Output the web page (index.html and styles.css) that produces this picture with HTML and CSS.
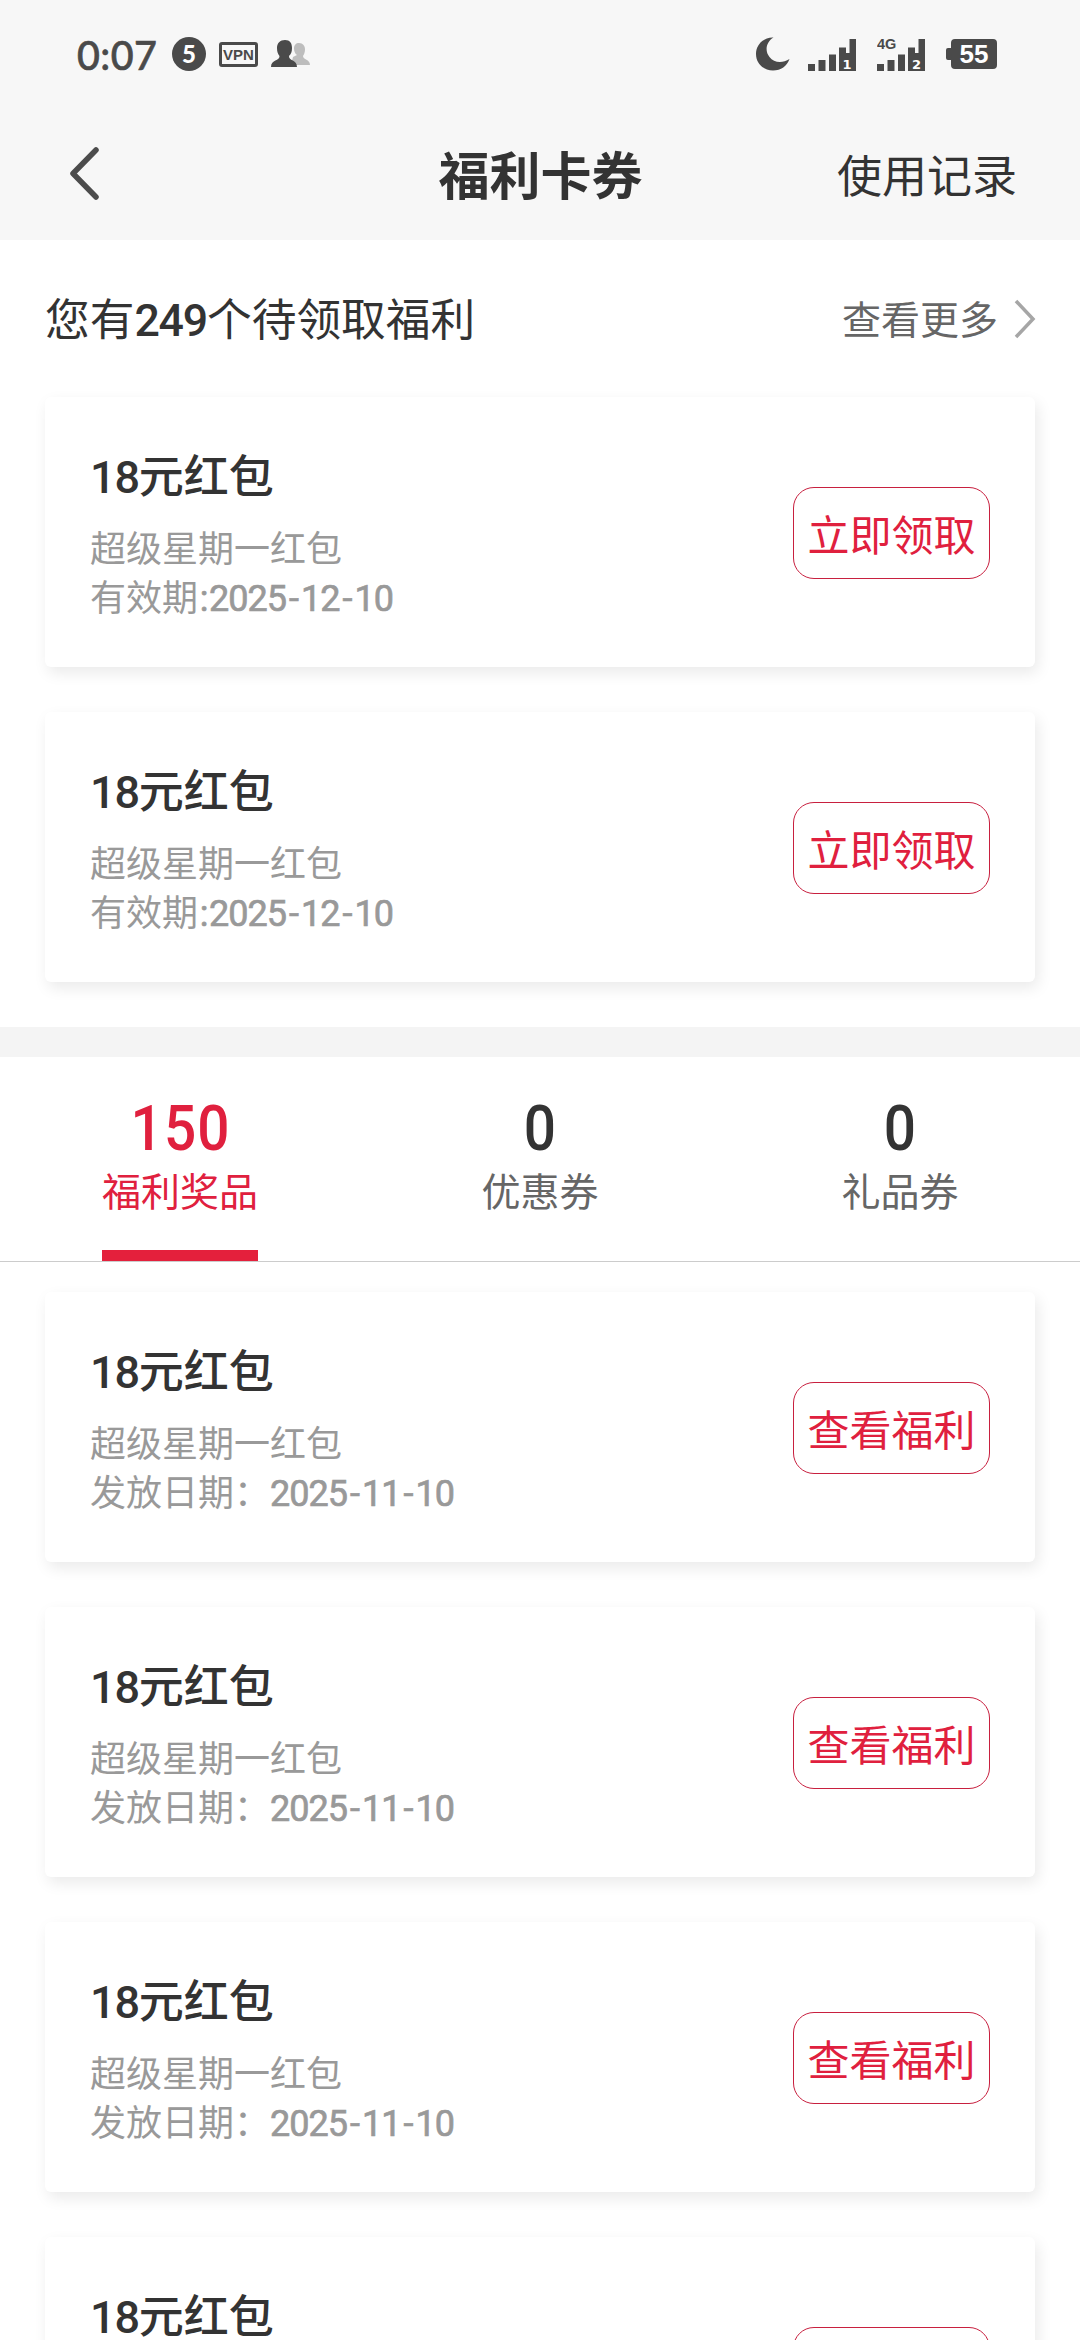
FILE: index.html
```html
<!DOCTYPE html>
<html lang="zh-CN">
<head>
<meta charset="utf-8">
<title>福利卡券</title>
<link rel="stylesheet" href="styles.css">
</head>
<body>
<div class="screen">
<header class="top">
  <div class="status">
    <div class="status-left">
      <span class="time">0:07</span>
      <span class="count">5</span>
      <span class="vpn">VPN</span>
      <svg class="people" width="40" height="28" viewBox="0 0 40 28">
        <path fill="#bdbdbd" d="M28 3c4 0 6 3 6 6.500c0 3-1 5-2 6.500c0 4 7 3 7 9H20l2-8 4-2c-2-1-3-4-3-6.500C23 5 25 3 28 3Z"/>
        <path fill="#4a4a4a" d="M14 0c5 0 7 3 7 8c0 4-1 6-3 8c-.5 5 8 3.500 8 11H0c0-7.500 9-6 8.500-11C7 14 6 12 6 8c0-5 3-8 8-8Z"/>
      </svg>
    </div>
    <div class="status-right">
      <svg class="moon" width="34" height="34" viewBox="0 0 34 34"><path fill="#4a4a4a" d="M17.500.5C10 5 8.500 14 13.500 20c4.500 6 13 6.500 20 2C31 29 25 33.500 17 33.500C7.500 33.500 0 26.500 0 17C0 7.500 8 0 17.500.5Z"/></svg>
      <svg class="signal" width="49" height="36" viewBox="0 0 49 36">
        <g fill="#4a4a4a"><path d="M0 28h7v7H0zM10.500 24h7v11h-7zM21 18.500h7V35h-7zM31 11.500h7V17h3.500V3H48v32H31z"/></g>
        <text class="sim" x="39" y="32.500" text-anchor="middle">1</text>
      </svg>
      <svg class="signal" width="49" height="36" viewBox="0 0 49 36">
        <g fill="#4a4a4a"><path d="M0 28h7v7H0zM10.500 24h7v11h-7zM21 18.500h7V35h-7zM31 11.500h7V17h3.500V3H48v32H31z"/></g>
        <text class="sim" x="39.500" y="32.500" text-anchor="middle">2</text>
        <text class="net" x="0" y="13">4G</text>
      </svg>
      <svg class="battery" width="51" height="30" viewBox="0 0 51 30">
        <path fill="#4a4a4a" d="M9 0h38a4 4 0 0 1 4 4v22a4 4 0 0 1-4 4H9a4 4 0 0 1-4-4v-5H2a2 2 0 0 1-2-2v-8a2 2 0 0 1 2-2h3V4a4 4 0 0 1 4-4Z"/>
        <text class="level" x="28" y="24" text-anchor="middle">55</text>
      </svg>
    </div>
  </div>
  <nav class="nav">
    <svg class="back" width="34" height="56" viewBox="0 0 34 56"><path d="M28 4 5 27.500 28 51" fill="none" stroke="#4c4c4c" stroke-width="5.500" stroke-linecap="round" stroke-linejoin="round"/></svg>
    <h1 class="title">福利卡券</h1>
    <a class="history">使用记录</a>
  </nav>
</header>

<section class="pending">
  <div class="pending-head">
    <p class="pending-text">您有<span class="num">249</span>个待领取福利</p>
    <a class="more"><span class="more-text">查看更多</span>
      <svg width="22" height="40" viewBox="0 0 22 40"><path d="M2 2 19 20 2 38" fill="none" stroke="#a6a6a6" stroke-width="3.500"/></svg>
    </a>
  </div>
  <div class="cards">
    <article class="card">
      <div class="info">
        <h2 class="name"><span class="num">18</span>元红包</h2>
        <p class="desc">超级星期一红包</p>
        <p class="desc">有效期<span class="date"><b>:</b>2025<i>-</i>12<i>-</i>10</span></p>
      </div>
      <button class="btn">立即领取</button>
    </article>
    <article class="card">
      <div class="info">
        <h2 class="name"><span class="num">18</span>元红包</h2>
        <p class="desc">超级星期一红包</p>
        <p class="desc">有效期<span class="date"><b>:</b>2025<i>-</i>12<i>-</i>10</span></p>
      </div>
      <button class="btn">立即领取</button>
    </article>
  </div>
</section>

<section class="owned">
  <div class="tabs">
    <div class="tab active"><span class="total">150</span><span class="label">福利奖品</span></div>
    <div class="tab"><span class="total">0</span><span class="label">优惠券</span></div>
    <div class="tab"><span class="total">0</span><span class="label">礼品券</span></div>
  </div>
  <div class="cards">
    <article class="card">
      <div class="info">
        <h2 class="name"><span class="num">18</span>元红包</h2>
        <p class="desc">超级星期一红包</p>
        <p class="desc">发放日期：<span class="date">2025<i>-</i>11<i>-</i>10</span></p>
      </div>
      <button class="btn">查看福利</button>
    </article>
    <article class="card">
      <div class="info">
        <h2 class="name"><span class="num">18</span>元红包</h2>
        <p class="desc">超级星期一红包</p>
        <p class="desc">发放日期：<span class="date">2025<i>-</i>11<i>-</i>10</span></p>
      </div>
      <button class="btn">查看福利</button>
    </article>
    <article class="card">
      <div class="info">
        <h2 class="name"><span class="num">18</span>元红包</h2>
        <p class="desc">超级星期一红包</p>
        <p class="desc">发放日期：<span class="date">2025<i>-</i>11<i>-</i>10</span></p>
      </div>
      <button class="btn">查看福利</button>
    </article>
    <article class="card">
      <div class="info">
        <h2 class="name"><span class="num">18</span>元红包</h2>
        <p class="desc">超级星期一红包</p>
        <p class="desc">发放日期：<span class="date">2025<i>-</i>11<i>-</i>10</span></p>
      </div>
      <button class="btn">查看福利</button>
    </article>
  </div>
</section>
</div>
</body>
</html>
```

FILE: styles.css
```css
* { box-sizing: border-box; margin: 0; padding: 0; }

body {
  background: #fff;
  color: #333;
  font-family: "Noto Sans CJK SC", sans-serif;
}

.screen { width: 1080px; height: 2340px; overflow: hidden; }

.top { height: 240px; background: #f7f7f7; }

.status {
  height: 108px;
  padding: 0 83px 0 77px;
  display: flex;
  justify-content: space-between;
  align-items: center;
  color: #4a4a4a;
}
.status-left, .status-right { display: flex; align-items: center; }
.time { width: 95px; font: 500 39.5px/50px Lato, sans-serif; letter-spacing: .4px; -webkit-text-stroke: .6px #4a4a4a; padding-top: 2px; }
.count {
  width: 34px; height: 34px; border-radius: 50%;
  background: #4a4a4a; color: #fff;
  font: 900 24px/34px Lato, sans-serif; text-align: center;
}
.vpn {
  width: 39px; height: 25px; margin-left: 13px;
  border: 3px solid #4a4a4a; border-radius: 3px;
  font: bold 15px/19px "Liberation Sans", sans-serif; text-align: center;
}
.people { margin-left: 13px; }
.signal { margin-left: 18px; }
.signal + .signal { margin-left: 20px; }
.battery { margin-left: 20px; }
.sim { font: bold 13px "DejaVu Sans", sans-serif; fill: #fff; }
.net { font: bold 14.5px "Liberation Sans", sans-serif; fill: #4a4a4a; }
.level { font: bold 26px "Liberation Sans", sans-serif; fill: #fff; }

.nav {
  height: 132px;
  padding: 0 63px 0 68px;
  display: grid;
  grid-template-columns: 1fr auto 1fr;
  align-items: center;
}
.title { font-size: 51px; line-height: 70px; font-weight: 700; margin: -3px 0 0 -4px; }
.history { justify-self: end; font-size: 45px; line-height: 60px; }

.pending { height: 817px; border-bottom: 30px solid #f4f4f4; }
.pending-head {
  height: 157px;
  padding: 0 44px 0 45px;
  display: flex;
  justify-content: space-between;
  align-items: center;
}
.pending-text { font-size: 44.7px; line-height: 60px; padding-top: 1px; }
.num { font-family: Roboto, sans-serif; font-weight: 500; letter-spacing: -1.2px; }
.more { display: flex; align-items: center; gap: 16px; font-size: 39px; color: #666; }
.more-text { margin-top: -3px; }

.cards { display: flex; flex-direction: column; gap: 45px; padding: 0 45px; }
.card {
  flex: none;
  height: 270px;
  padding: 0 45px;
  display: flex;
  justify-content: space-between;
  align-items: center;
  background: #fff;
  border-radius: 6px;
  box-shadow: 3px 6px 15px rgba(0, 0, 0, .085);
}
.info { padding-top: 4px; }
.name { font-size: 45px; line-height: 60px; font-weight: 500; margin-bottom: 14px; }
.desc { font-size: 36px; line-height: 49px; color: #999; }
.date { font-family: Roboto, sans-serif; font-weight: 400; letter-spacing: -1px; -webkit-text-stroke: .7px #999; }
.date b { display: inline-block; width: 11px; text-align: center; font-weight: 400; }
.date i { display: inline-block; width: 15px; text-align: center; font-style: normal; }
.btn {
  width: 197px;
  height: 92px;
  margin-top: 2px;
  border: 1px solid #c8203f;
  border-radius: 21px;
  background: none;
  color: #e0203e;
  font: 42px/1 "Noto Sans CJK SC", sans-serif;
}

.tabs {
  height: 205px;
  margin-bottom: 30px;
  display: grid;
  grid-template-columns: repeat(3, 1fr);
  border-bottom: 1px solid #ccc;
}
.tab {
  justify-self: center;
  display: flex;
  flex-direction: column;
  align-items: center;
  padding-top: 37px;
  border-bottom: 11px solid transparent;
}
.total {
  font: 500 63px/70px Roboto, sans-serif;
  letter-spacing: 1.3px;
  margin-left: 2px;
  transform: scaleX(.9);
}
.label { font-size: 39px; line-height: 58px; margin-top: -4px; color: #666; }
.active { border-color: #e4203c; }
.active .total, .active .label { color: #e0203e; }
```
